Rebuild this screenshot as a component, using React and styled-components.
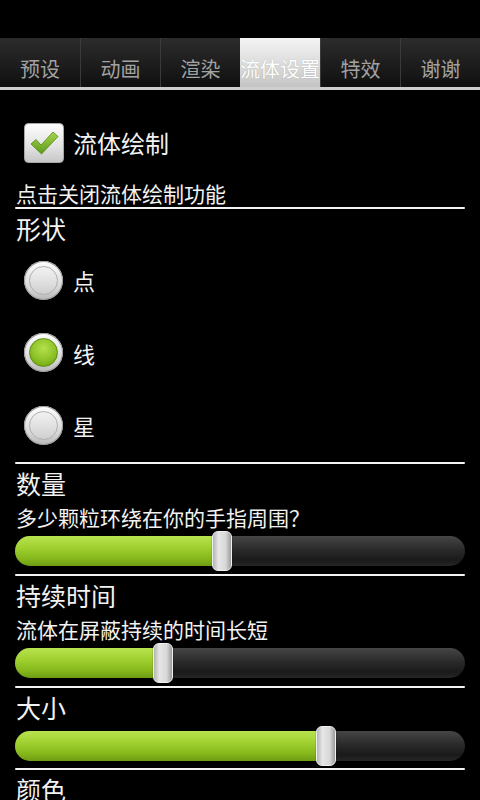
import React from "react";
import styled, { createGlobalStyle } from "styled-components";

const GlobalStyle = createGlobalStyle`
  html, body {
    margin: 0;
    padding: 0;
    background: #000;
  }
  body {
    font-family: "Noto Sans CJK SC", "Noto Sans", sans-serif;
    color: #f2f2f2;
  }
`;

const Screen = styled.div`
  width: 480px;
  height: 800px;
  overflow: hidden;
  background: #000;
`;

const StatusBar = styled.div`
  height: 38px;
  background: #000;
`;

const TabBar = styled.div`
  display: flex;
  height: 49px;
  border-bottom: 3px solid #cfcfcf;
`;

const Tab = styled.div`
  flex: 0 0 80px;
  box-sizing: border-box;
  overflow: hidden;
  white-space: nowrap;
  text-align: center;
  padding-top: 16px;
  font-size: 20px;
  line-height: 30px;
  color: ${(p) => (p.$active ? "#fff" : "#a2a2a2")};
  background: ${(p) =>
    p.$active
      ? "linear-gradient(#f4f4f4, #d4d4d4 70%, #c4c4c4)"
      : "linear-gradient(#2c2c2c, #1b1b1b 60%, #101010)"};
  border-left: ${(p) => (p.$first || p.$active ? "none" : "1px solid #3a3a3a")};
  text-shadow: ${(p) => (p.$active ? "0 0 1px rgba(0,0,0,0.25)" : "none")};
`;

const Content = styled.div`
  padding: 0 15px 0 15px;
`;

const CheckRow = styled.div`
  display: flex;
  align-items: center;
  gap: 9px;
  padding: 33px 0 0 9px;
  height: 39px;
  font-size: 24px;
`;

const Summary = styled.div`
  margin-top: 17px;
  padding-left: 1px;
  font-size: 21px;
  line-height: 28px;
`;

const Divider = styled.div`
  height: 2px;
  background: #f4f4f4;
  border-radius: 1px;
`;

const Section = styled.div`
  padding-top: 3px;
`;

const Title = styled.div`
  padding-left: 1px;
  font-size: 25px;
  line-height: 32px;
`;

const Subtitle = styled.div`
  margin-top: 4px;
  padding-left: 1px;
  font-size: 21px;
  line-height: 28px;
`;

const RadioRow = styled.div`
  display: flex;
  align-items: center;
  gap: 10px;
  height: 72.5px;
  padding-left: 9px;
  font-size: 22px;
`;

const RadioOuter = styled.div`
  width: 39px;
  height: 39px;
  border-radius: 50%;
  box-sizing: border-box;
  background: linear-gradient(#ffffff, #d6d6d6 70%, #b8b8b8);
  display: flex;
  align-items: center;
  justify-content: center;
  box-shadow: inset 0 0 0 1px #9a9a9a;
`;

const RadioInner = styled.div`
  width: 29px;
  height: 29px;
  border-radius: 50%;
  box-sizing: border-box;
  border: 1px solid ${(p) => (p.$on ? "#5f8f12" : "#b0b0b0")};
  background: ${(p) =>
    p.$on
      ? "radial-gradient(circle at 50% 35%, #b4e04c, #8cc226 55%, #62940f)"
      : "linear-gradient(#f2f2f2, #dedede 60%, #cfcfcf)"};
`;

const SliderBox = styled.div`
  position: relative;
  height: 40px;
  margin: ${(p) => (p.$tight ? "0 0 3px" : "3px 0 2px")};
  display: flex;
  align-items: center;
`;

const Track = styled.div`
  position: relative;
  width: 452px;
  height: 30px;
  border-radius: 15px;
  overflow: hidden;
  background: linear-gradient(#464646, #2a2a2a 45%, #1a1a1a 80%, #262626);
`;

const Fill = styled.div`
  height: 100%;
  background: linear-gradient(#b8e34e, #9fd030 40%, #86b81c 75%, #6d9c12);
`;

const Thumb = styled.div`
  position: absolute;
  top: 0;
  width: 20px;
  height: 40px;
  box-sizing: border-box;
  border-radius: 6px;
  border: 1px solid #f0f0f0;
  background: linear-gradient(90deg, #b4b4b4, #e6e6e6 30%, #d8d8d8 70%, #9c9c9c);
  box-shadow: 0 0 1px #000;
`;

const CheckBox = () => (
  <svg width="40" height="40" viewBox="0 0 40 40">
    <defs>
      <linearGradient id="cbBg" x1="0" y1="0" x2="0" y2="1">
        <stop offset="0" stopColor="#fdfdfd" />
        <stop offset="0.6" stopColor="#e2e2e2" />
        <stop offset="1" stopColor="#c6c6c6" />
      </linearGradient>
      <linearGradient id="cbMark" x1="0" y1="0" x2="0" y2="1">
        <stop offset="0" stopColor="#a6d64a" />
        <stop offset="1" stopColor="#5e9a1c" />
      </linearGradient>
    </defs>
    <rect x="0.5" y="0.5" width="39" height="39" rx="4" fill="url(#cbBg)" stroke="#a8a8a8" />
    <path
      d="M7 21 L12 16.5 L17 22 L29 9 L34 13.5 L17.5 31 Z"
      fill="url(#cbMark)"
      stroke="#4f8a12"
      strokeWidth="0.8"
      strokeLinejoin="round"
    />
  </svg>
);

const Slider = ({ value, tight }) => (
  <SliderBox $tight={tight}>
    <Track>
      <Fill style={{ width: `${value * 452}px` }} />
    </Track>
    <Thumb style={{ left: `${value * 452 - 10}px` }} />
  </SliderBox>
);

const tabs = ["预设", "动画", "渲染", "流体设置", "特效", "谢谢"];
const shapes = [
  { label: "点", on: false },
  { label: "线", on: true },
  { label: "星", on: false },
];

const App = () => (
  <Screen>
    <GlobalStyle />
    <StatusBar />
    <TabBar>
      {tabs.map((t, i) => (
        <Tab key={t} $first={i === 0} $active={i === 3}>
          {t}
        </Tab>
      ))}
    </TabBar>
    <Content>
      <CheckRow>
        <CheckBox />
        <span>流体绘制</span>
      </CheckRow>
      <Summary>点击关闭流体绘制功能</Summary>
      <Divider />
      <Section>
        <Title>形状</Title>
        {shapes.map((s) => (
          <RadioRow key={s.label}>
            <RadioOuter>
              <RadioInner $on={s.on} />
            </RadioOuter>
            <span>{s.label}</span>
          </RadioRow>
        ))}
      </Section>
      <Divider />
      <Section>
        <Title>数量</Title>
        <Subtitle>多少颗粒环绕在你的手指周围？</Subtitle>
        <Slider value={0.458} tight />
      </Section>
      <Divider />
      <Section>
        <Title>持续时间</Title>
        <Subtitle>流体在屏蔽持续的时间长短</Subtitle>
        <Slider value={0.328} tight />
      </Section>
      <Divider />
      <Section>
        <Title>大小</Title>
        <Slider value={0.687} />
      </Section>
      <Divider />
      <Section>
        <Title>颜色</Title>
      </Section>
    </Content>
  </Screen>
);

export default App;
